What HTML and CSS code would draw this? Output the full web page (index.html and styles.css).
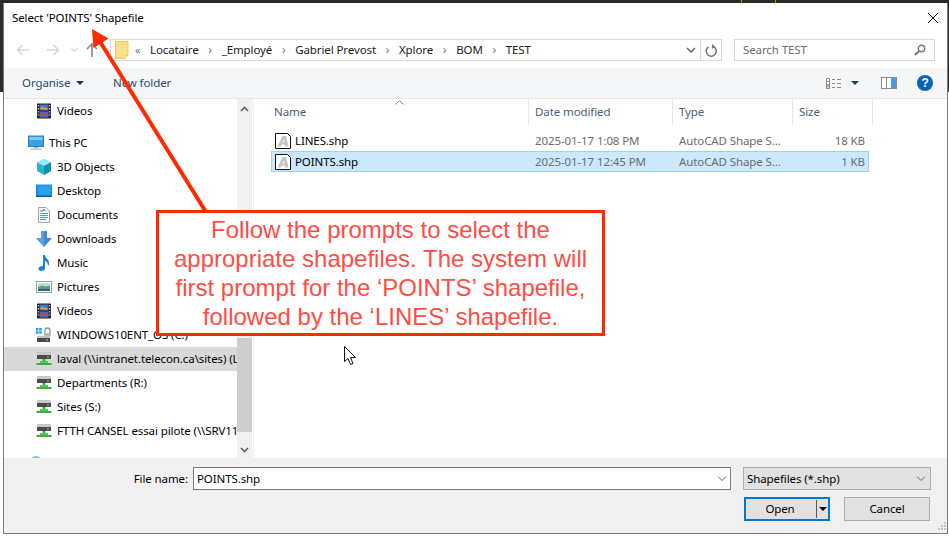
FILE: index.html
```html
<!DOCTYPE html>
<html lang="en">
<head>
<meta charset="utf-8">
<title>Select 'POINTS' Shapefile</title>
<link rel="stylesheet" href="styles.css">
</head>
<body>
<svg class="defs" width="0" height="0" aria-hidden="true">
  <defs>
    <symbol id="i-video" viewBox="0 0 16 16">
      <rect x="1" y="0.5" width="14" height="15" fill="#222"/>
      <rect x="3.5" y="1.5" width="9" height="6" fill="#3b6fd0"/>
      <rect x="3.5" y="8.5" width="9" height="6" fill="#3b6fd0"/>
      <path d="M4 6l2-3 2 2 2-1 2 3z" fill="#e8a020"/>
      <path d="M4 13l2-3 3 2 3-2v3z" fill="#d04030"/>
      <path d="M1.8 2h1v1.500h-1zM1.800 5h1v1.500h-1zM1.800 8h1v1.500h-1zM1.800 11h1v1.500h-1zM13.200 2h1v1.500h-1zM13.200 5h1v1.500h-1zM13.200 8h1v1.500h-1zM13.200 11h1v1.500h-1z" fill="#ddd"/>
    </symbol>
    <symbol id="i-pc" viewBox="0 0 16 16">
      <rect x="0.500" y="1" width="15" height="10.500" fill="#3aa0e8" stroke="#2f7fc0"/>
      <rect x="1.500" y="2" width="13" height="3" fill="#7cc8f4"/>
      <rect x="6" y="12" width="4" height="1.500" fill="#a8a8a8"/>
      <rect x="2" y="13.500" width="12" height="1.500" fill="#c4c8cc"/>
    </symbol>
    <symbol id="i-3d" viewBox="0 0 16 16">
      <path d="M8 0l7 3.500v8.500l-7 4-7-4v-8.500z" fill="#28b4d0"/>
      <path d="M8 0l7 3.500-7 3.500-7-3.500z" fill="#9ce8f4"/>
      <path d="M8 7l7-3.500v8.500l-7 4z" fill="#1090b0"/>
    </symbol>
    <symbol id="i-desktop" viewBox="0 0 16 16">
      <rect x="0" y="1.500" width="16" height="12" fill="#1e88e0"/>
      <path d="M1 2.500h14v9.500l-12.500 0.500z" fill="#2aa0f0"/>
      <rect x="0" y="12.500" width="16" height="1.500" fill="#0f5fa8"/>
    </symbol>
    <symbol id="i-docs" viewBox="0 0 16 16">
      <path d="M2.500 0.500h7.500l3.500 3.500v11.500h-11z" fill="#f8f8f8" stroke="#a0a0a0"/>
      <path d="M4 4h3M4 6.500h8M4 8.500h8M4 10.500h8M4 12.500h6" stroke="#5d96c8" fill="none"/>
      <path d="M8 1.500l2 2.500h-4z" fill="#4aa0d8"/>
    </symbol>
    <symbol id="i-down" viewBox="0 0 16 16">
      <path d="M5 0h6v7h5l-8 9-8-9h5z" fill="#3f87d8"/>
      <path d="M5 0h3v16l-8-9h5z" fill="#5ba0e4"/>
    </symbol>
    <symbol id="i-music" viewBox="0 0 16 16">
      <path d="M7 0h2c0 3 4 4 4 8 0 1.500-.5 2.500-1 3 0-3-1.500-4.500-3-5v7c0 1.800-1.800 3-3.700 3-1.500 0-2.800-.8-2.800-2.200 0-1.700 1.800-2.800 3.500-2.800.7 0 1.500.2 1 .5z" fill="#1c7ed6"/>
    </symbol>
    <symbol id="i-pic" viewBox="0 0 16 16">
      <rect x="0.500" y="2.500" width="15" height="11" fill="#fff" stroke="#9a9a9a"/>
      <rect x="2" y="4" width="12" height="4" fill="#bcdcec"/>
      <path d="M2 8l4-1.500 4 1 4-1v5.500h-12z" fill="#5f9a80"/>
      <rect x="2" y="10" width="12" height="2" fill="#34607c"/>
    </symbol>
    <symbol id="i-osdrive" viewBox="0 0 16 16">
      <path d="M0 1h2.500v2.500h-2.500zM3.200 1h2.500v2.500h-2.500zM0 4.200h2.500v2.500h-2.500zM3.200 4.200h2.500v2.500h-2.500z" fill="#18a0e8"/>
      <path d="M9 6V3.500a2.500 2.500 0 0 1 5 0V6" fill="none" stroke="#9a9a9a" stroke-width="1.300"/>
      <rect x="8" y="6" width="7" height="3" fill="#b8b8b8"/>
      <rect x="1" y="9" width="13" height="2" fill="#c4c4c4"/>
      <rect x="1" y="11" width="13" height="4" fill="#4a4a4a"/>
      <rect x="10" y="12.500" width="2" height="1" fill="#6fe060"/>
    </symbol>
    <symbol id="i-net" viewBox="0 0 16 16">
      <rect x="1" y="1" width="14" height="3" fill="#c8c8c8"/>
      <rect x="1" y="4" width="14" height="4" fill="#4a4a4a"/>
      <rect x="11" y="5.500" width="2" height="1" fill="#6fe060"/>
      <rect x="6.500" y="8" width="3" height="3" fill="#3cae3c"/>
      <rect x="4" y="10" width="8" height="2" fill="#55c855"/>
      <rect x="0.500" y="12" width="15" height="2" fill="#3cae3c"/>
    </symbol>
    <symbol id="i-globe" viewBox="0 0 16 16">
      <circle cx="8" cy="8" r="7" fill="#8cc0e8"/>
      <path d="M4 3l4 1-2 4-3-1zM9 8l4 1-2 4-2-1z" fill="#7ab070"/>
    </symbol>
    <symbol id="i-shp" viewBox="0 0 16 16">
      <path d="M0.500 0.500h12l3 3v12h-15z" fill="#fff" stroke="#111"/>
      <path d="M2.500 13.500l5-10.500h3.500l2.500 10.500h-3.500l-.4-2h-2.800l-1 2zM7.300 9.300h2.300l-.6-3z" fill="#c4c4c4"/>
    </symbol>
  </defs>
</svg>

<main class="dialog">
  <header class="titlebar">
    <span class="title">Select 'POINTS' Shapefile</span>
    <svg class="close" width="10" height="10" viewBox="0 0 10 10"><path d="M0 0l10 10M10 0L0 10" stroke="#111" fill="none"/></svg>
  </header>

  <div class="addressrow">
    <div class="navbtns">
      <svg width="14" height="12" viewBox="0 0 14 12"><path d="M6.500 1L1.500 6l5 5M1.500 6H13" stroke="#d6d6d6" stroke-width="1.600" fill="none"/></svg>
      <svg class="fwd" width="14" height="12" viewBox="0 0 14 12"><path d="M7.500 1l5 5-5 5M12.500 6H1" stroke="#d6d6d6" stroke-width="1.600" fill="none"/></svg>
      <svg class="hist" width="7" height="5" viewBox="0 0 7 5"><path d="M.5.500l3 3 3-3" stroke="#d6d6d6" fill="none" stroke-width="1.200"/></svg>
      <svg class="up" width="12" height="14" viewBox="0 0 12 14"><path d="M1 6l5-5 5 5M6 1v13" stroke="#8c8c8c" stroke-width="1.700" fill="none"/></svg>
    </div>
    <div class="addressbox">
      <svg class="folder" width="14" height="18" viewBox="0 0 14 18"><path d="M.5.500h12.500v14l-3 3h-9.500z" fill="#fbe08a" stroke="#e8c860"/><path d="M10 17.500v-3h3" fill="#fff3c0" stroke="#e8c860"/></svg>
      <span class="crumb-more">«</span>
      <span class="crumb">Locataire</span><span class="sep">›</span>
      <span class="crumb">_Employé</span><span class="sep">›</span>
      <span class="crumb">Gabriel Prevost</span><span class="sep">›</span>
      <span class="crumb">Xplore</span><span class="sep">›</span>
      <span class="crumb">BOM</span><span class="sep">›</span>
      <span class="crumb">TEST</span>
      <svg class="addr-chev" width="10" height="6" viewBox="0 0 10 6"><path d="M1 1l4 4 4-4" stroke="#666" stroke-width="1.500" fill="none"/></svg>
      <span class="refresh">
        <svg width="12" height="13" viewBox="0 0 12 13"><path d="M3.500 3A5 5 0 1 0 8 2.500" stroke="#777" stroke-width="1.500" fill="none"/><path d="M7 0v5l3-2.500z" fill="#777"/></svg>
      </span>
    </div>
    <div class="searchbox">
      <span>Search TEST</span>
      <svg width="12" height="12" viewBox="0 0 12 12"><circle cx="7.500" cy="4.500" r="3.200" stroke="#777" stroke-width="1.400" fill="none"/><path d="M5 7l-4 4" stroke="#777" stroke-width="2"/></svg>
    </div>
  </div>

  <div class="toolbar">
    <span class="tool organise">Organise<i class="caret"></i></span>
    <span class="tool newfolder">New folder</span>
    <span class="toolright">
      <svg class="viewicon" width="16" height="11" viewBox="0 0 16 11"><path d="M.5.500h3v3h-3zM.5 3.500h3v3.500h-3zM.5 7h3v3.500h-3z" fill="#fff" stroke="#8a8a8a"/><rect x="1.500" y="8" width="1" height="1.500" fill="#d04040"/><path d="M6 1.500h3M11 1.500h4M6 5.500h3M11 5.500h4M6 9.500h3M11 9.500h4" stroke="#8a8a8a"/></svg>
      <i class="caret"></i>
      <svg class="pane" width="16" height="12" viewBox="0 0 16 12"><rect x=".5" y=".5" width="15" height="11" fill="#fff" stroke="#8a8a8a"/><rect x="10" y="1" width="5" height="10" fill="#4a9be8"/><path d="M5.500 1v10" stroke="#8a8a8a"/></svg>
      <span class="help">?</span>
    </span>
  </div>

  <div class="content">
    <nav class="navpane">
      <ul class="tree">
        <li class="row sub"><svg class="ico"><use href="#i-video"/></svg>Videos</li>
        <li class="row top gap"><svg class="ico"><use href="#i-pc"/></svg>This PC</li>
        <li class="row sub"><svg class="ico"><use href="#i-3d"/></svg>3D Objects</li>
        <li class="row sub"><svg class="ico"><use href="#i-desktop"/></svg>Desktop</li>
        <li class="row sub"><svg class="ico"><use href="#i-docs"/></svg>Documents</li>
        <li class="row sub"><svg class="ico"><use href="#i-down"/></svg>Downloads</li>
        <li class="row sub"><svg class="ico"><use href="#i-music"/></svg>Music</li>
        <li class="row sub"><svg class="ico"><use href="#i-pic"/></svg>Pictures</li>
        <li class="row sub"><svg class="ico"><use href="#i-video"/></svg>Videos</li>
        <li class="row sub"><svg class="ico"><use href="#i-osdrive"/></svg>WINDOWS10ENT_OS (C:)</li>
        <li class="row sub selected"><svg class="ico"><use href="#i-net"/></svg>laval (\\intranet.telecon.ca\sites) (L:)</li>
        <li class="row sub"><svg class="ico"><use href="#i-net"/></svg>Departments (R:)</li>
        <li class="row sub"><svg class="ico"><use href="#i-net"/></svg>Sites (S:)</li>
        <li class="row sub"><svg class="ico"><use href="#i-net"/></svg>FTTH CANSEL essai pilote (\\SRV11\share)</li>
        <li class="row top gap"><svg class="ico"><use href="#i-globe"/></svg>Network</li>
      </ul>
      <div class="scrollbar">
        <svg class="sb-up" width="9" height="6" viewBox="0 0 9 6"><path d="M1 5l3.500-3.500L8 5" stroke="#606060" stroke-width="1.600" fill="none"/></svg>
        <span class="thumb"></span>
        <svg class="sb-down" width="9" height="6" viewBox="0 0 9 6"><path d="M1 1l3.500 3.500L8 1" stroke="#606060" stroke-width="1.600" fill="none"/></svg>
      </div>
    </nav>

    <section class="files">
      <div class="cols">
        <span class="col c-name">Name<svg class="sort" width="9" height="5" viewBox="0 0 9 5"><path d="M.5 4.500l4-4 4 4" stroke="#8a8a8a" fill="none"/></svg></span>
        <span class="col c-date">Date modified</span>
        <span class="col c-type">Type</span>
        <span class="col c-size">Size</span>
      </div>
      <div class="file">
        <span class="c-name fname"><svg class="shp"><use href="#i-shp"/></svg>LINES.shp</span>
        <span class="c-date meta">2025-01-17 1:08 PM</span>
        <span class="c-type meta">AutoCAD Shape S...</span>
        <span class="c-size meta num">18 KB</span>
      </div>
      <div class="file chosen">
        <span class="c-name fname"><svg class="shp"><use href="#i-shp"/></svg>POINTS.shp</span>
        <span class="c-date meta">2025-01-17 12:45 PM</span>
        <span class="c-type meta">AutoCAD Shape S...</span>
        <span class="c-size meta num">1 KB</span>
      </div>
    </section>
  </div>

  <footer class="footer">
    <div class="frow">
      <label class="flabel">File name:</label>
      <div class="fname-input"><span>POINTS.shp</span>
        <svg width="10" height="6" viewBox="0 0 10 6"><path d="M1 .5l4 4 4-4" stroke="#666" fill="none"/></svg>
      </div>
      <div class="filter"><span>Shapefiles (*.shp)</span>
        <svg width="10" height="6" viewBox="0 0 10 6"><path d="M1 .5l4 4 4-4" stroke="#666" fill="none"/></svg>
      </div>
    </div>
    <div class="brow">
      <button class="btn open"><span class="open-label">Open</span><span class="split"></span><i class="caret black"></i></button>
      <button class="btn cancel">Cancel</button>
    </div>
    <svg class="grip" width="9" height="9" viewBox="0 0 9 9"><path d="M7 0h2v2H7zM4 3h2v2H4zM7 3h2v2H7zM1 6h2v2H1zM4 6h2v2H4zM7 6h2v2H7z" fill="#c4c4c4"/></svg>
  </footer>
</main>

<svg class="arrow" width="240" height="220" viewBox="0 0 240 220" aria-hidden="true">
  <path d="M206 212L99 40" stroke="#ff2a00" stroke-width="4" fill="none"/>
  <path d="M92 29l16.500 9.500-15 9.500z" fill="#ff2a00"/>
</svg>

<aside class="callout">Follow the prompts to select the appropriate shapefiles. The system will first prompt for the ‘POINTS’ shapefile, followed by the ‘LINES’ shapefile.</aside>

<svg class="cursor" width="13" height="19" viewBox="0 0 13 19" aria-hidden="true"><path d="M.5.500v15l3.500-3 2.500 6 2.500-1-2.500-6h5z" fill="#fff" stroke="#111"/></svg>
</body>
</html>
```

FILE: styles.css
```css
* { box-sizing: border-box; }
html, body { margin: 0; padding: 0; }
body {
  width: 949px;
  height: 536px;
  position: relative;
  overflow: hidden;
  background:
    linear-gradient(#c08a3a, #c08a3a) 741px 0 / 1px 3px no-repeat,
    linear-gradient(#c08a3a, #c08a3a) 775px 0 / 1px 3px no-repeat,
    linear-gradient(#2b2b2b 0, #2b2b2b 92px, #ffffff 92px);
  font: 11.5px/16px "Noto Sans", "Open Sans", sans-serif;
  letter-spacing: -0.1px;
  color: #000;
  padding: 3px 1px 2px 3px;
}
.defs { position: absolute; }
.dialog {
  width: 945px;
  height: 531px;
  background: #fff;
  border-left: 1px solid #7a7a7a;
  border-right: 1px solid #7a7a7a;
  border-bottom: 1px solid #7a7a7a;
  display: flex;
  flex-direction: column;
}
.titlebar {
  height: 30px;
  display: flex;
  align-items: center;
  justify-content: space-between;
  padding: 0 9px 0 8px;
  flex: none;
}

.addressrow {
  height: 35px;
  display: flex;
  align-items: flex-start;
  padding-top: 6px;
  flex: none;
}
.navbtns {
  width: 106px;
  height: 22px;
  padding-left: 12px;
  display: flex;
  align-items: center;
}
.fwd { margin-left: 16px; }
.hist { margin-left: 11px; }
.up { margin-left: 8px; }
.addressbox {
  width: 612px;
  height: 22px;
  border: 1px solid #d9d9d9;
  display: flex;
  align-items: center;
  padding-left: 4px;
  color: #1a1a1a;
}
.folder { margin-right: 6px; flex: none; }
.crumb-more { width: 15px; color: #777; font-size: 11px; }
.crumb { white-space: nowrap; }
.sep { width: 23px; text-align: center; color: #777; font-size: 12px; flex: none; }
.addr-chev { margin-left: auto; }
.refresh {
  width: 21px;
  height: 20px;
  margin-left: 4px;
  border-left: 1px solid #d9d9d9;
  display: flex;
  align-items: center;
  justify-content: center;
}
.searchbox {
  width: 201px;
  height: 22px;
  margin-left: 12px;
  border: 1px solid #d9d9d9;
  display: flex;
  align-items: center;
  justify-content: space-between;
  padding: 0 8px 0 8px;
  color: #6d6d6d;
}

.toolbar {
  height: 31px;
  flex: none;
  background: #f5f6f7;
  border-bottom: 1px solid #e5e8ea;
  display: flex;
  align-items: center;
  padding-left: 18px;
  color: #2a4a6e;
}
.tool { display: flex; align-items: center; }
.organise { width: 91px; }
.caret {
  display: inline-block;
  width: 0;
  height: 0;
  border-left: 4px solid transparent;
  border-right: 4px solid transparent;
  border-top: 4px solid #1e3a5f;
}
.organise .caret { margin-left: 6px; }
.toolright {
  margin-left: auto;
  display: flex;
  align-items: center;
  padding-right: 14px;
}
.toolright .caret { margin-left: 9px; }
.pane { margin-left: 22px; }
.help {
  width: 16px;
  height: 16px;
  margin-left: 20px;
  border-radius: 50%;
  background: #0a63b8;
  color: #fff;
  font: bold 12px/16px "Liberation Sans", sans-serif;
  text-align: center;
}

.content { height: 359px; flex: none; display: flex; }
.navpane {
  width: 250px;
  flex: none;
  display: flex;
  overflow: hidden;
  border-right: 1px solid #efefef;
}
.tree {
  list-style: none;
  margin: 0;
  padding: 0;
  width: 233px;
  flex: none;
  overflow: hidden;
}
.row {
  height: 24px;
  display: flex;
  align-items: center;
  white-space: nowrap;
  overflow: hidden;
}
.row.sub { padding-left: 32px; }
.row.top { padding-left: 24px; }
.row.gap { margin-top: 8px; }
.row.selected { background: #d9d9d9; }
.ico { width: 16px; height: 16px; margin-right: 5px; flex: none; }
.scrollbar {
  width: 15px;
  background: #f0f0f0;
  flex: none;
  display: flex;
  flex-direction: column;
  align-items: center;
}
.sb-up { margin-top: 7px; flex: none; }
.thumb {
  width: 15px;
  height: 94px;
  margin-top: 226px;
  background: #cdcdcd;
  flex: none;
}
.sb-down { margin-top: 15px; flex: none; }

.files { flex: 1; padding-left: 17px; min-width: 0; }
.cols {
  height: 25px;
  display: flex;
  color: #4c607a;
  margin-bottom: 6px;
}
.col {
  display: flex;
  align-items: center;
  border-right: 1px solid #e5e5e5;
  position: relative;
}
.sort { position: absolute; left: 124px; top: 1px; }
.c-name { width: 258px; padding-left: 3px; flex: none; }
.c-date { width: 144px; padding-left: 6px; flex: none; }
.c-type { width: 120px; padding-left: 6px; flex: none; }
.c-size { width: 80px; padding-left: 6px; flex: none; }
.file {
  width: 598px;
  height: 21px;
  display: flex;
  align-items: center;
  border: 1px solid transparent;
}
.file .c-name { width: 257px; padding-left: 3px; }
.file.chosen { background: #cce8ff; border-color: #99d1ff; }
.fname { display: flex; align-items: center; white-space: nowrap; }
.shp { width: 16px; height: 16px; margin-right: 4px; flex: none; }
.meta { color: #6d6d6d; white-space: nowrap; }
.file .num { text-align: right; padding-right: 3px; width: 75px; }

.footer {
  flex: 1;
  background: #f0f0f0;
  position: relative;
  padding: 9px 16px 0 0;
}
.frow { display: flex; align-items: center; height: 23px; }
.flabel { width: 184px; text-align: right; flex: none; }
.fname-input {
  width: 538px;
  height: 23px;
  margin-left: 5px;
  background: #fff;
  border: 1px solid #7a7a7a;
  display: flex;
  align-items: center;
  justify-content: space-between;
  padding: 0 3px 0 3px;
}
.filter {
  width: 188px;
  height: 23px;
  margin-left: 12px;
  background: #e1e1e1;
  border: 1px solid #adadad;
  display: flex;
  align-items: center;
  justify-content: space-between;
  padding: 0 4px 0 3px;
}
.brow {
  display: flex;
  justify-content: flex-end;
  gap: 14px;
  margin-top: 7px;
  padding-right: 1px;
}
.btn {
  width: 86px;
  height: 24px;
  padding: 0;
  background: #e1e1e1;
  border: 1px solid #adadad;
  font: inherit;
  letter-spacing: inherit;
  color: #000;
  display: flex;
  align-items: center;
  justify-content: center;
}
.open { border: 2px solid #0078d7; justify-content: flex-start; }
.open-label { width: 68px; margin-right: 2px; text-align: center; }
.split { width: 1px; height: 18px; background: #5a5a5a; }
.caret.black { border-top-color: #000; margin-left: 2px; }
.grip { position: absolute; right: 1px; bottom: 2px; }

.arrow { position: absolute; left: 0; top: 0; pointer-events: none; }
.callout {
  position: absolute;
  left: 156px;
  top: 210px;
  width: 449px;
  height: 126px;
  border: 3px solid #ff2a00;
  background: #fff;
  color: #ff4d45;
  font: 24px/29px "Liberation Sans", Arial, sans-serif;
  letter-spacing: 0;
  text-align: center;
  padding: 2px 8px 0;
}
.cursor { position: absolute; left: 344px; top: 346px; }
```
